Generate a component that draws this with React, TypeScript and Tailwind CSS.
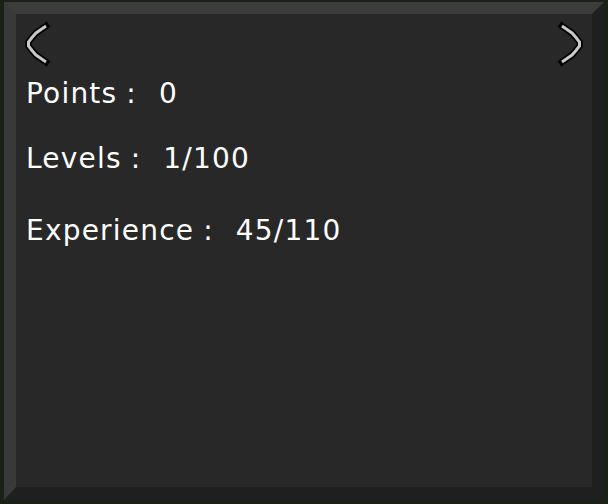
import React from "react";

function Chevron({ flip }: { flip?: boolean }) {
  const d = "M46,26 L41,29.5 L36,33 L32,37.5 L28.5,42 L28.5,46 L32,50.5 L36,55 L41,58.5 L46,62";
  return (
    <svg
      width="28"
      height="46"
      viewBox="24 21 28 46"
      style={{ transform: flip ? "scaleX(-1)" : undefined }}
    >
      <path d={d} fill="none" stroke="#000" strokeWidth="6.5" strokeLinejoin="miter" strokeLinecap="square" />
      <path d={d} fill="none" stroke="#c8c8c8" strokeWidth="3" strokeLinejoin="miter" />
    </svg>
  );
}

function Row({ label, value, className }: { label: string; value: string; className: string }) {
  return (
    <div className={"flex items-baseline tracking-[1.2px] " + className}>
      <span>{label}</span>
      <span className="ml-[9px]">:</span>
      <span className="ml-[22px]">{value}</span>
    </div>
  );
}

export default function App() {
  return (
    <div className="w-[608px] h-[504px] bg-[#1a2218] pt-[2px] pl-[4px] pr-[4px] pb-[4px]">
      <div className="w-full h-full flex flex-col border-t-[12px] border-l-[12px] border-r-[12px] border-b-[13px] border-t-[#3c3c3c] border-l-[#393939] border-r-[#1f1f1f] border-b-[#1f1f1f] bg-[#282828]">
        <div className="flex justify-between pl-[8px] pr-[8px] pt-[7px]">
          <Chevron />
          <Chevron flip />
        </div>
        <div
          className="flex flex-col pl-[10px] text-white text-[28px] leading-none"
          style={{ fontFamily: '"DejaVu Sans", sans-serif' }}
        >
          <Row label="Points" value="0" className="mt-[13px]" />
          <Row label="Levels" value="1/100" className="mt-[37px]" />
          <Row label="Experience" value="45/110" className="mt-[44px]" />
        </div>
      </div>
    </div>
  );
}
